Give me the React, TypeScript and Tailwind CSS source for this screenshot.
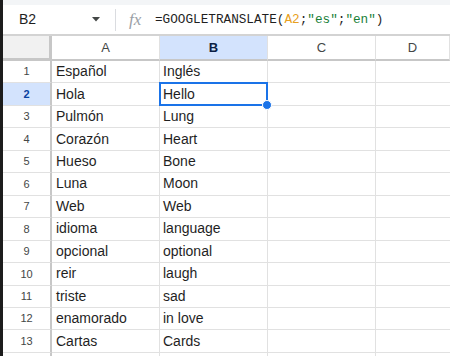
import React from "react";

const rows: [string, string][] = [
  ["Español", "Inglés"],
  ["Hola", "Hello"],
  ["Pulmón", "Lung"],
  ["Corazón", "Heart"],
  ["Hueso", "Bone"],
  ["Luna", "Moon"],
  ["Web", "Web"],
  ["idioma", "language"],
  ["opcional", "optional"],
  ["reir", "laugh"],
  ["triste", "sad"],
  ["enamorado", "in love"],
  ["Cartas", "Cards"],
  ["", ""],
];

const cols = ["A", "B", "C", "D"];

function FormulaBar() {
  return (
    <div className="flex h-[29px] shrink-0 items-center bg-white">
      <div className="flex w-[112px] items-center pl-[16px] pr-[12px]">
        <span className="flex-1 text-[14px] text-[#1f1f1f]">B2</span>
        <svg width="8" height="5" viewBox="0 0 8 5" className="mr-[3px]">
          <path d="M0 0h8L4 4.5z" fill="#444746" />
        </svg>
      </div>
      <div className="h-[22px] w-px bg-[#dadce0]" />
      <span
        className="ml-[13px] w-[26px] text-[17px] italic text-[#9aa0a6]"
        style={{ fontFamily: '"Liberation Serif", "DejaVu Serif", serif' }}
      >
        fx
      </span>
      <span
        className="text-[12.7px] text-[#1f1f1f]"
        style={{ fontFamily: '"Liberation Mono", "DejaVu Sans Mono", monospace' }}
      >
        =GOOGLETRANSLATE(<span className="text-[#e8a020]">A2</span>;
        <span className="text-[#188038]">"es"</span>;
        <span className="text-[#188038]">"en"</span>)
      </span>
    </div>
  );
}

export default function App() {
  return (
    <div
      className="flex h-[356px] w-[450px] overflow-hidden bg-white"
      style={{ fontFamily: '"Liberation Sans", Arial, sans-serif' }}
    >
      <div className="w-[3px] shrink-0 bg-[#1c1c1c]" />
      <div className="flex min-w-0 flex-1 flex-col overflow-hidden">
        <div className="h-[5px] shrink-0 bg-[#f3f5f7]" />
        <FormulaBar />
        <div className="h-[2px] shrink-0 bg-[#d3d3d3]" />

        <div className="grid shrink-0 grid-cols-[49px_108px_108px_108px_1fr] grid-rows-[25px] auto-rows-[22.46px]">
          {/* header row */}
          <div className="border-b-[3px] border-r-[3px] border-[#c7c7c7] bg-[#f1f1f1]" />
          {cols.map((c) => (
            <div
              key={c}
              className={`flex items-center justify-center border-b-[2px] border-r border-b-[#c7c7c7] border-r-[#e1e1e1] text-[13px] ${
                c === "B"
                  ? "bg-[#d3e3fd] font-bold text-[#0b1f44]"
                  : "bg-white text-[#444746]"
              }`}
            >
              {c}
            </div>
          ))}

          {rows.map(([a, b], i) => {
            const n = i + 1;
            const sel = n === 2;
            return (
              <React.Fragment key={n}>
                <div
                  className={`flex items-center justify-center border-b border-r-[2px] border-b-[#e1e1e1] border-r-[#c7c7c7] text-[11px] ${
                    sel ? "bg-[#d3e3fd] font-bold text-[#0842a0]" : "bg-white text-[#444746]"
                  }`}
                >
                  {n <= 13 ? n : ""}
                </div>
                <div className="flex items-center border-b border-r border-[#e1e1e1] pl-[4px] text-[14px] text-[#1f1f1f]">
                  {a}
                </div>
                <div className="relative flex items-center border-b border-r border-[#e1e1e1] pl-[3px] text-[14px] text-[#1f1f1f]">
                  {b}
                  {sel && (
                    <>
                      <div className="absolute -bottom-px -left-px -right-px -top-px border-2 border-[#1a73e8]" />
                      <div className="absolute -bottom-[5px] -right-[5px] z-10 h-[10px] w-[10px] rounded-full border border-white bg-[#1a73e8]" />
                    </>
                  )}
                </div>
                <div className="border-b border-r border-[#e1e1e1]" />
                <div className="border-b border-[#e1e1e1]" />
              </React.Fragment>
            );
          })}
        </div>
      </div>
    </div>
  );
}
